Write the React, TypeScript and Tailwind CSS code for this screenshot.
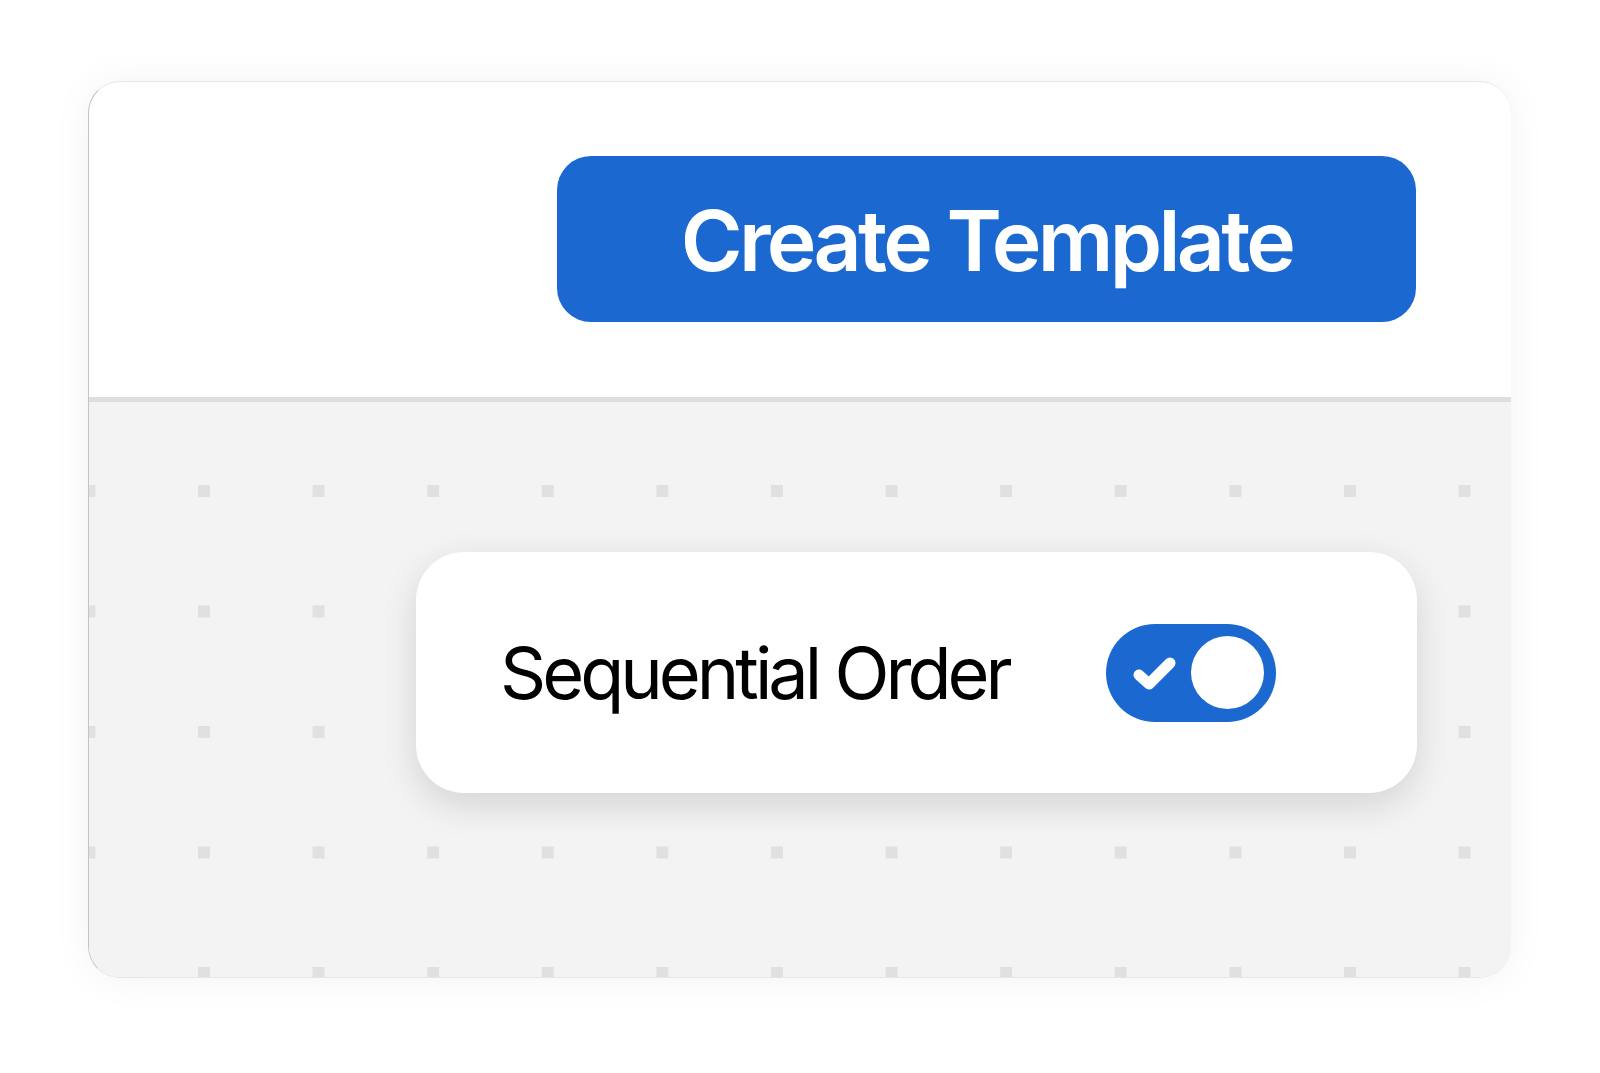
import React from 'react';

const Toggle = ({ checked }: { checked: boolean }) => {
  return (
    <button
      className="flex h-[98px] w-[170px] shrink-0 items-center justify-between rounded-full bg-[#1b68d0] pl-[27px] pr-[12px]"
      aria-pressed={checked}
    >
      <svg width="44" height="36" viewBox="0 0 44 36" className="mt-[2px]">
        <path d="M6 19 L16 28 L37 7" fill="none" stroke="#fff" strokeWidth="11" strokeLinecap="round" strokeLinejoin="round" />
      </svg>
      <span className="block h-[73px] w-[73px] rounded-full bg-white" />
    </button>
  );
};

export default function App() {
  return (
    <div className="min-h-screen bg-white pl-[88px] pt-[81px] font-['Inter',sans-serif]">
      <div className="flex h-[897px] w-[1423px] flex-col overflow-hidden rounded-[32px] border-b border-l border-t border-b-[#e6e6e6] border-l-[#c4c4c4] border-t-[#e6e6e6] bg-white shadow-[0_0_40px_rgba(0,0,0,0.05)]">
        {/* header */}
        <div className="flex h-[315px] shrink-0 items-start justify-end pr-[95px] pt-[74px]">
          <button className="flex h-[166px] w-[859px] items-center justify-center rounded-[34px] bg-[#1b68d0] pt-[4px] text-[84px] font-semibold tracking-[-3.7px] text-white">
            Create Template
          </button>
        </div>
        <div className="h-[5px] shrink-0 bg-[#dedede]" />

        {/* canvas */}
        <div className="flex-1 bg-[#f3f3f3] bg-[conic-gradient(from_270deg_at_12px_12px,#e0e0e0_25%,transparent_0)] bg-[length:114.6px_120.5px] bg-position-[109px_83px] pl-[327px] pr-[95px] pt-[150px]">
          <div className="flex h-[241px] w-[1001px] items-center rounded-[48px] bg-white pl-[84px] shadow-[0_12px_36px_rgba(0,0,0,0.13)]">
            <div className="w-[606px] text-[72px] font-normal tracking-[-4px] text-black">Sequential Order</div>
            <Toggle checked />
          </div>
        </div>
      </div>
    </div>
  );
}
